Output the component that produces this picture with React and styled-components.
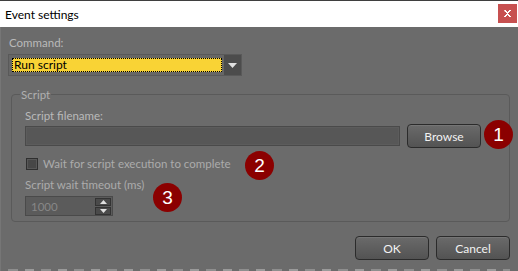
import React from "react";
import styled, { createGlobalStyle } from "styled-components";

const Global = createGlobalStyle`
  html, body { margin: 0; padding: 0; background: #6b6b6b; }
  body { font-family: Lato, "Liberation Sans", sans-serif; }
`;

const Window = styled.div`
  width: 518px;
  height: 271px;
  display: flex;
  flex-direction: column;
  background: #6b6b6b;
  overflow: hidden;
`;

const TitleBar = styled.div`
  height: 26px;
  border-top: 1px solid #3f3f3f;
  background: #ffffff;
  display: flex;
  align-items: center;
  justify-content: space-between;
  padding: 0 1px 0 5px;
`;

const Title = styled.span`
  font-family: Lato, "Liberation Sans", sans-serif;
  font-size: 12px;
  color: #000;
`;

const CloseButton = styled.div`
  width: 19px;
  height: 19px;
  background: #c75050;
  display: flex;
  align-items: center;
  justify-content: center;
  align-self: flex-start;
  margin-top: 3px;
`;

const Body = styled.div`
  flex: 1;
  display: flex;
  flex-direction: column;
  padding: 8px 8px 0 8px;
  box-shadow: inset 1px 0 0 #767676;
`;

const Label = styled.div`
  font-family: Lato, "Liberation Sans", sans-serif;
  font-size: 11.5px;
  line-height: 15px;
  color: ${(p) => (p.$dim ? "#acacac" : "#bababa")};
  margin-left: ${(p) => p.$indent || 0}px;
`;

const Select = styled.div`
  margin-top: 4px;
  width: 234px;
  height: 22px;
  box-sizing: border-box;
  border: 1px solid #595959;
  background: #666666;
  display: flex;
`;

const SelectValue = styled.div`
  flex: 1;
  background: #f9d335;
  outline: 1px dotted #000;
  outline-offset: -1px;
  margin: 3px 2px 3px 3px;
  font-family: Lato, "Liberation Sans", sans-serif;
  font-size: 12px;
  line-height: 14px;
  padding-left: 2px;
  color: #000;
`;

const SelectArrow = styled.div`
  width: 17px;
  background: #4c4c4c;
  display: flex;
  align-items: center;
  justify-content: center;
`;

const Group = styled.fieldset`
  margin: 11px 0 0 3px;
  width: 499px;
  box-sizing: border-box;
  border: 1px solid #5a5a5a;
  border-radius: 4px;
  padding: 6px 13px 5px 13px;
  display: flex;
  flex-direction: column;
  align-items: flex-start;
`;

const Legend = styled.legend`
  font-family: Lato, "Liberation Sans", sans-serif;
  font-size: 11.5px;
  line-height: 15px;
  color: #b0b0b0;
  padding: 0 1px;
  margin-left: -5px;
`;

const Row = styled.div`
  display: flex;
  align-items: center;
  position: relative;
  margin-top: ${(p) => p.$mt || 0}px;
`;

const TextBox = styled.div`
  width: 375px;
  height: 20px;
  box-sizing: border-box;
  background: #575757;
  border: 1px solid #4a4a4a;
  box-shadow: inset 0 0 0 1px #5c5c5c;
`;

const Button = styled.div`
  width: 74px;
  height: 24px;
  box-sizing: border-box;
  border: 1px solid #2b2b2b;
  border-radius: 4px;
  background: linear-gradient(#6a6a6a, #535353);
  box-shadow: inset 0 1px 0 #757575;
  display: flex;
  align-items: center;
  justify-content: center;
  font-family: Lato, "Liberation Sans", sans-serif;
  font-size: 12px;
  color: #f2f2f2;
  margin-left: ${(p) => p.$gap || 0}px;
`;

const Badge = styled.div`
  position: absolute;
  left: ${(p) => p.$x}px;
  top: ${(p) => p.$y}px;
  width: 29px;
  height: 29px;
  border-radius: 50%;
  background: #8b0000;
  color: #fff;
  display: flex;
  align-items: center;
  justify-content: center;
  font-family: "Liberation Sans", sans-serif;
  font-size: 19px;
`;

const Check = styled.div`
  width: 12px;
  height: 12px;
  box-sizing: border-box;
  border: 1px solid #2f2f2f;
  background: #474747;
  box-shadow: inset 0 0 0 1px #585858;
  margin: 0 5px 0 1px;
`;

const Spin = styled.div`
  margin-top: 4px;
  width: 88px;
  height: 20px;
  box-sizing: border-box;
  border: 1px solid #4a4a4a;
  background: #5b5b5b;
  display: flex;
  align-items: center;
  justify-content: space-between;
  padding-left: 5px;
  font-family: Lato, "Liberation Sans", sans-serif;
  font-size: 11.5px;
  color: #878787;
`;

const SpinButtons = styled.div`
  display: flex;
  flex-direction: column;
  gap: 1px;
  padding-right: 1px;
`;

const SpinButton = styled.div`
  width: 16px;
  height: 8px;
  box-sizing: border-box;
  background: #4a4a4a;
  border: 1px solid #333333;
  display: flex;
  align-items: center;
  justify-content: center;
`;

const Footer = styled.div`
  display: flex;
  justify-content: flex-end;
  margin-top: 14px;
`;

const BottomStrip = styled.div`
  margin-top: auto;
  height: 2px;
  background: repeating-linear-gradient(90deg, #8e8e8e 0 10px, #6b6b6b 10px 17px, #9a9a9a 17px 26px, #6b6b6b 26px 33px);
`;

const Tri = ({ up, w = 9, h = 5, color = "#e0e0e0" }) => (
  <svg width={w} height={h} viewBox={`0 0 ${w} ${h}`}>
    <polygon
      points={up ? `0,${h} ${w},${h} ${w / 2},0` : `0,0 ${w},0 ${w / 2},${h}`}
      fill={color}
    />
  </svg>
);

export default function App() {
  return (
    <>
      <Global />
      <Window>
        <TitleBar>
          <Title>Event settings</Title>
          <CloseButton>
            <svg width="7" height="7" viewBox="0 0 7 7">
              <path d="M0 0h2v1h1v1h1v-1h1v-1h2v1h-1v1h-1v1h-1v1h1v1h1v1h1v1h-2v-1h-1v-1h-1v1h-1v1h-2v-1h1v-1h1v-1h1v-1h-1v-1h-1z" fill="#fff" />
            </svg>
          </CloseButton>
        </TitleBar>
        <Body>
          <Label $indent={1}>Command:</Label>
          <Select>
            <SelectValue>Run script</SelectValue>
            <SelectArrow>
              <Tri w={9} h={5} />
            </SelectArrow>
          </Select>
          <Group>
            <Legend>Script</Legend>
            <Label>Script filename:</Label>
            <Row $mt={1}>
              <TextBox />
              <Button $gap={7}>Browse</Button>
              <Badge $x={459} $y={-4}>1</Badge>
            </Row>
            <Row $mt={8}>
              <Check />
              <Label $dim>Wait for script execution to complete</Label>
              <Badge $x={220} $y={-5}>2</Badge>
            </Row>
            <Row $mt={6}>
              <Label $dim>Script wait timeout (ms)</Label>
              <Badge $x={128} $y={6}>3</Badge>
            </Row>
            <Spin>
              1000
              <SpinButtons>
                <SpinButton><Tri up w={7} h={4} /></SpinButton>
                <SpinButton><Tri w={7} h={4} /></SpinButton>
              </SpinButtons>
            </Spin>
          </Group>
          <Footer>
            <Button>OK</Button>
            <Button $gap={7}>Cancel</Button>
          </Footer>
          <BottomStrip />
        </Body>
      </Window>
    </>
  );
}
